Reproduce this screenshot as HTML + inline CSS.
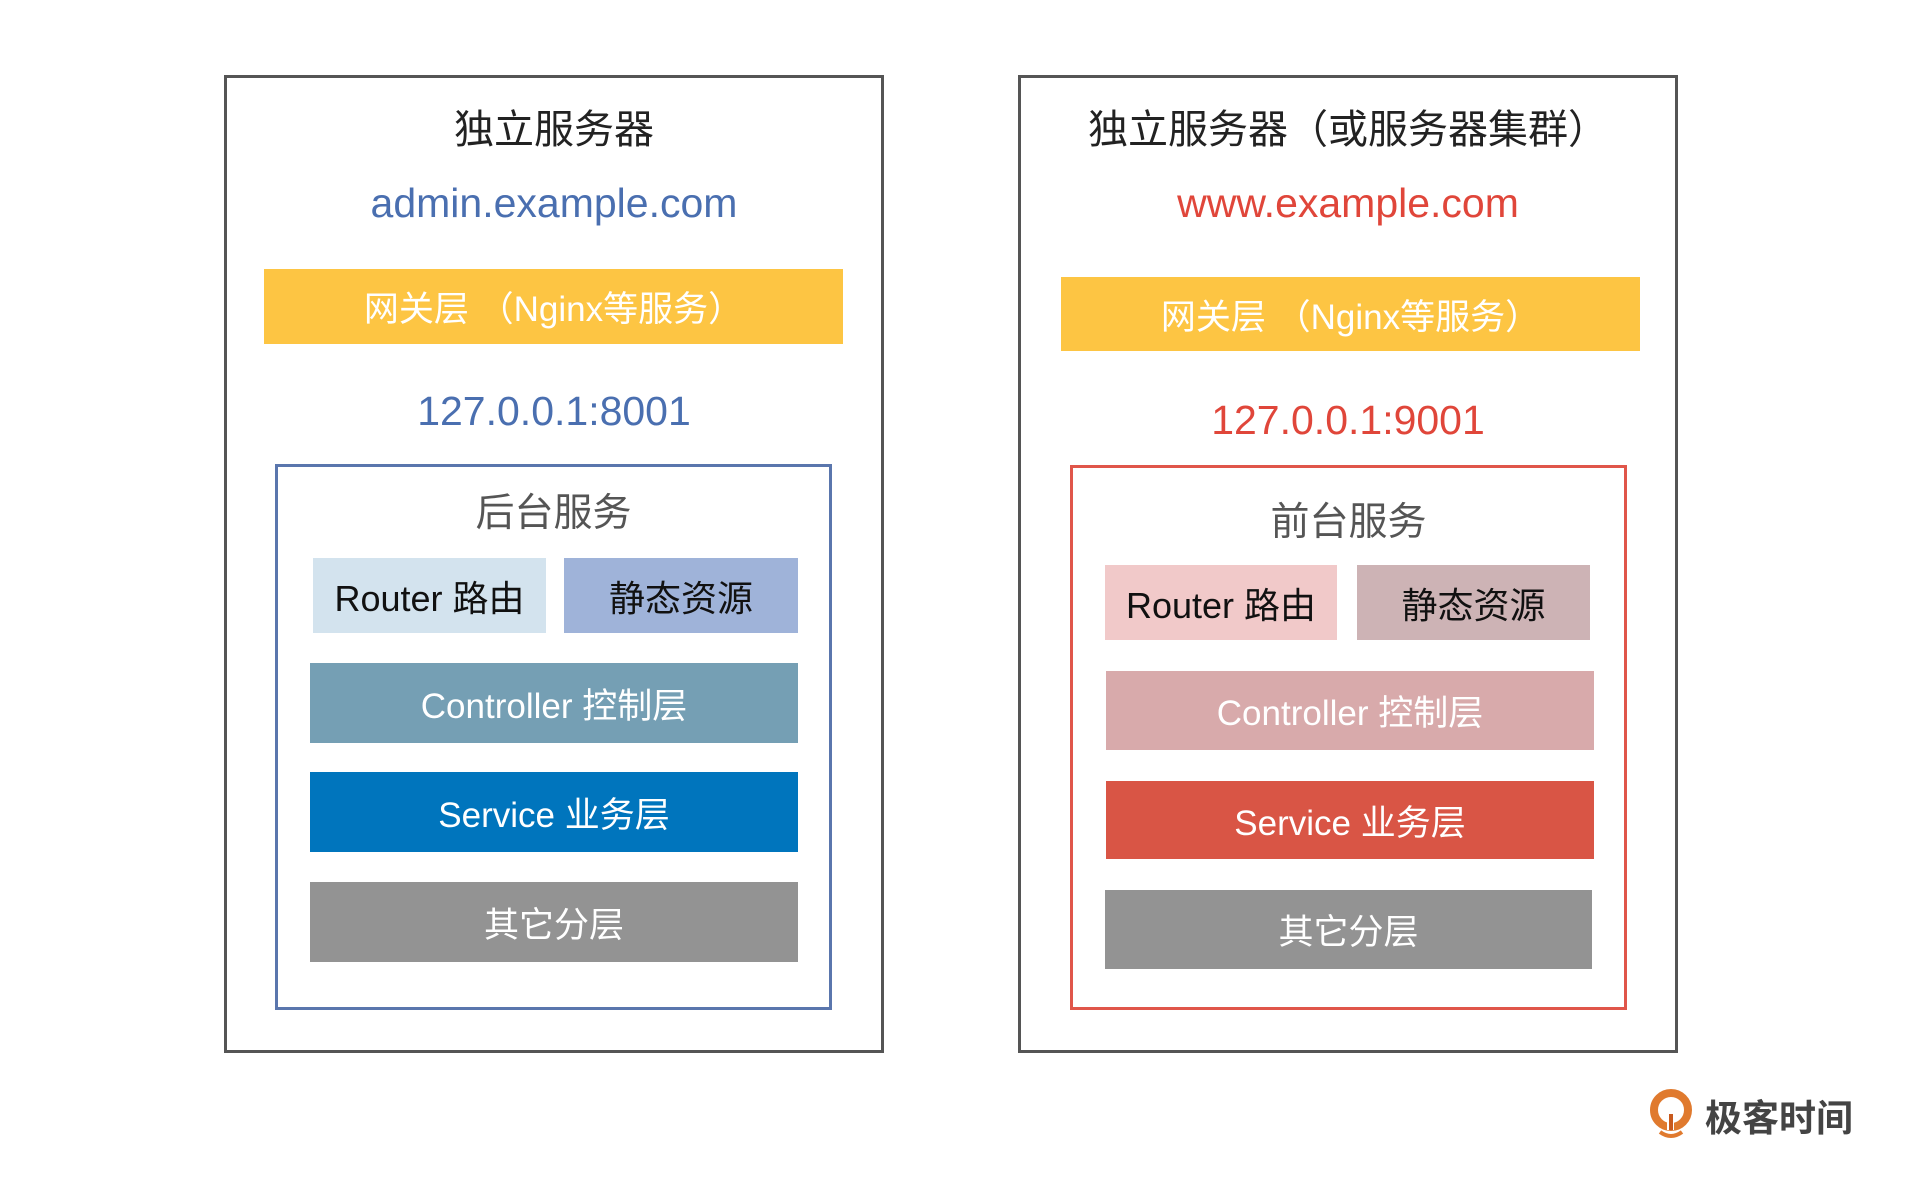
<!DOCTYPE html>
<html><head><meta charset="utf-8"><style>
body{margin:0;width:1920px;height:1188px;background:#fff;position:relative;overflow:hidden;font-family:"Liberation Sans","Noto Sans CJK SC",sans-serif}
div{position:absolute;box-sizing:border-box}
.c{display:flex;align-items:center;justify-content:center;white-space:nowrap}
.ob{border:3px solid #555}
.t{font-size:40px;color:#222;height:50px}
.u{font-size:41px;height:50px}
.bar{font-size:35px;color:#fff}
.in{font-size:39px;color:#555;height:50px}
.sm{font-size:36px;color:#111}
</style></head><body>
<div class="ob" style="left:224px;top:75px;width:660px;height:978px"></div>
<div class="c t" style="left:224px;width:660px;top:101px">独立服务器</div>
<div class="c u" style="left:224px;width:660px;top:178px;color:#4a6fb0">admin.example.com</div>
<div class="c bar" style="left:264px;top:269px;width:579px;height:75px;background:#fdc543">网关层 （Nginx等服务）</div>
<div class="c u" style="left:224px;width:660px;top:386px;color:#4a6fb0">127.0.0.1:8001</div>
<div style="left:275px;top:464px;width:557px;height:546px;border:3px solid #5a76ad"></div>
<div class="c in" style="left:275px;width:557px;top:485px">后台服务</div>
<div class="c sm" style="left:313px;top:558px;width:233px;height:75px;background:#d3e3ee">Router 路由</div>
<div class="c sm" style="left:564px;top:558px;width:234px;height:75px;background:#9fb3d9">静态资源</div>
<div class="c bar" style="left:310px;top:663px;width:488px;height:80px;background:#759fb4">Controller 控制层</div>
<div class="c bar" style="left:310px;top:772px;width:488px;height:80px;background:#0075bd">Service 业务层</div>
<div class="c bar" style="left:310px;top:882px;width:488px;height:80px;background:#939393">其它分层</div>

<div class="ob" style="left:1018px;top:75px;width:660px;height:978px"></div>
<div class="c t" style="left:1018px;width:660px;top:101px">独立服务器（或服务器集群）</div>
<div class="c u" style="left:1018px;width:660px;top:178px;color:#e0463a">www.example.com</div>
<div class="c bar" style="left:1061px;top:277px;width:579px;height:74px;background:#fdc543">网关层 （Nginx等服务）</div>
<div class="c u" style="left:1018px;width:660px;top:395px;color:#e0463a">127.0.0.1:9001</div>
<div style="left:1070px;top:465px;width:557px;height:545px;border:3px solid #e0564a"></div>
<div class="c in" style="left:1070px;width:557px;top:494px">前台服务</div>
<div class="c sm" style="left:1105px;top:565px;width:232px;height:75px;background:#f1c9c9">Router 路由</div>
<div class="c sm" style="left:1357px;top:565px;width:233px;height:75px;background:#cdb3b5">静态资源</div>
<div class="c bar" style="left:1106px;top:671px;width:488px;height:79px;background:#d8aaab">Controller 控制层</div>
<div class="c bar" style="left:1106px;top:781px;width:488px;height:78px;background:#d95545">Service 业务层</div>
<div class="c bar" style="left:1105px;top:890px;width:487px;height:79px;background:#939393">其它分层</div>

<svg style="position:absolute;left:1648px;top:1088px" width="46" height="52" viewBox="0 0 46 52">
<circle cx="23" cy="22" r="17" fill="none" stroke="#e07a2e" stroke-width="8"/>
<rect x="19" y="22" width="7" height="20" fill="#fff"/>
<rect x="21" y="26" width="4" height="16" fill="#c85a1e"/>
<path d="M12 44 Q23 52 34 44" stroke="#e07a2e" stroke-width="4" fill="none"/>
</svg>
<div class="c" style="left:1698px;top:1091px;width:162px;height:48px;font-size:37px;color:#444;font-weight:bold">极客时间</div>
</body></html>
